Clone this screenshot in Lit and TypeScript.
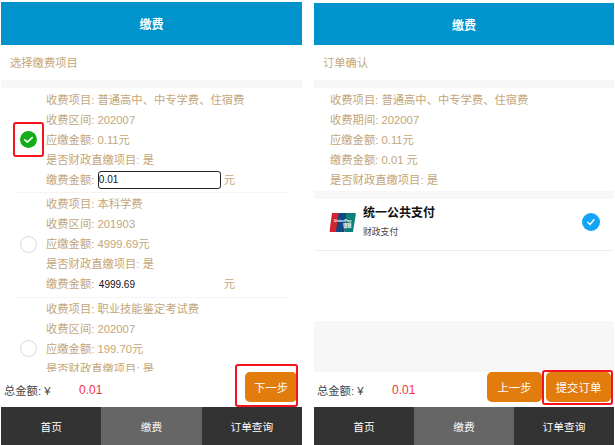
import { LitElement, html, css, svg } from "lit";
import { customElement } from "lit/decorators.js";

const items = [
  { name: "普通高中、中专学费、住宿费", term: "202007", due: "0.11元", pay: "0.01", checked: true },
  { name: "本科学费", term: "201903", due: "4999.69元", pay: "4999.69", checked: false },
  { name: "职业技能鉴定考试费", term: "202007", due: "199.70元", pay: "199.7", checked: false },
];

const tabs = (active: number) => html`<nav class="tabs">
  ${["首页", "缴费", "订单查询"].map(
    (t, i) => html`<div class="tab ${i === active ? "on" : ""}">${t}</div>`
  )}
</nav>`;

const unionpay = svg`<svg class="logo" width="27" height="21" viewBox="0 0 28 22">
  <path d="M3 1h9l-3 20H1.500a1 1 0 0 1-1-1.200L3 1z" fill="#d5222f"/>
  <path d="M10 1h9l-3 20H7L10 1z" fill="#14477f"/>
  <path d="M18 1h9a1 1 0 0 1 1 1.200L25 21h-9L18 1z" fill="#0f7f7c"/>
  <text x="14" y="10" font-size="4" font-weight="700" fill="#fff" text-anchor="middle" font-family="Liberation Sans">UnionPay</text>
  <text x="19" y="16" font-size="4.500" font-weight="700" fill="#fff" text-anchor="middle" font-family="Noto Sans CJK SC">银联</text>
</svg>`;

@customElement("app-root")
export class AppRoot extends LitElement {
  static styles = css`
    :host {
      display: flex;
      height: 445px;
      width: 615px;
      overflow: hidden;
      background: #fff;
      font-family: "Liberation Sans", "Noto Sans CJK SC", sans-serif;
      font-size: 11.3px;
      color: #c4a679;
    }
    .panel {
      position: relative;
      display: flex;
      flex-direction: column;
      width: 301px;
      margin-top: 2px;
      margin-left: 1px;
      height: 443px;
      overflow: hidden;
    }
    .panel.second {
      width: 300px;
      margin-left: 12px;
      margin-top: 3px;
      height: 442px;
    }
    .header {
      flex: none;
      height: 43px;
      background: #0093cc;
      color: #fff;
      font-weight: 700;
      font-size: 12px;
      display: flex;
      align-items: center;
      justify-content: center;
    }
    .second .header {
      height: 42px;
    }
    .sub {
      flex: none;
      height: 35px;
      box-sizing: border-box;
      padding-left: 9px;
      padding-bottom: 2px;
      display: flex;
      align-items: center;
      background: #fff;
    }
    .band {
      flex: none;
      height: 8px;
      background: #f7f7f7;
    }
    .scroll {
      flex: 1;
      min-height: 0;
      overflow: hidden;
      padding: 1.500px 14px 0 15px;
      background: #fff;
    }
    .item {
      display: flex;
      align-items: center;
      border-bottom: 1px solid #f4f4f4;
      padding-bottom: 2.500px;
      margin-bottom: 1px;
    }
    .radio {
      flex: none;
      box-sizing: border-box;
      width: 17px;
      height: 17px;
      margin-left: 4px;
      margin-right: 9px;
      border-radius: 50%;
      border: 1px solid #d9d9d9;
    }
    .radio.on {
      border: none;
    }
    .radio.on svg {
      display: block;
    }
    .lines {
      flex: 1;
      min-width: 0;
    }
    .line {
      height: 20px;
      line-height: 20px;
      white-space: nowrap;
      display: flex;
      align-items: center;
    }
    .amount {
      box-sizing: border-box;
      width: 123px;
      height: 18px;
      margin-left: 3.500px;
      margin-right: 3px;
      padding: 0;
      font: 10px "Liberation Sans", sans-serif;
      color: #111;
      background: transparent;
      border: 1px solid transparent;
      border-radius: 3px;
      outline: none;
    }
    .amount.on {
      border: 1px solid #222;
      background: #fff;
    }
    .summary {
      flex: none;
      background: #fff;
      padding: 1.500px 0 1.500px 16px;
    }
    .pay {
      flex: none;
      height: 52px;
      box-sizing: border-box;
      background: #fff;
      border-bottom: 1px solid #eee;
      display: flex;
      align-items: center;
      padding: 0 14px 5px 15px;
    }
    .logo {
      flex: none;
      margin-right: 7px;
    }
    .pay-text {
      flex: 1;
      display: flex;
      flex-direction: column;
      gap: 7px;
    }
    .pay-title {
      font-weight: 700;
      font-size: 12px;
      line-height: 14px;
      color: #111;
    }
    .pay-sub {
      font-size: 8.800px;
      line-height: 11px;
      color: #444;
    }
    .blank {
      flex: none;
      height: 70px;
      background: #fff;
    }
    .fill {
      flex: 1;
      min-height: 0;
      background: #f7f7f7;
    }
    .footer {
      flex: none;
      height: 35px;
      display: flex;
      align-items: center;
      background: #fff;
      padding-left: 3px;
      padding-right: 3px;
      color: #444;
    }
    .label {
      width: 75px;
      flex: none;
    }
    .total {
      color: #f5333f;
      font-size: 12px;
      flex: 1;
    }
    .btn {
      flex: none;
      height: 30px;
      background: #e27c0d;
      color: #fff;
      border-radius: 5px;
      font-size: 11.400px;
      display: flex;
      align-items: center;
      justify-content: center;
      margin-top: -5px;
    }
    .btn.next {
      width: 52px;
      margin-right: 2px;
    }
    .btn.prev {
      width: 55px;
      margin-right: 4px;
    }
    .btn.submit {
      width: 65px;
    }
    .tabs {
      flex: none;
      height: 38px;
      display: flex;
      background: #333;
      color: #fff;
      font-size: 10.700px;
    }
    .tab {
      flex: 1;
      display: flex;
      align-items: center;
      justify-content: center;
    }
    .tab.on {
      background: #666;
    }
    .mark {
      position: absolute;
      box-sizing: border-box;
      border: 2px solid #f5141e;
      border-radius: 3px;
      pointer-events: none;
    }
    .mark.a {
      left: 12px;
      top: 120px;
      width: 31px;
      height: 35px;
    }
    .mark.b {
      left: 234px;
      top: 362px;
      width: 63px;
      height: 43px;
    }
    .mark.c {
      left: 228px;
      top: 367px;
      width: 71px;
      height: 35px;
    }
  `;

  render() {
    return html`
      <section class="panel">
        <header class="header">缴费</header>
        <div class="sub">选择缴费项目</div>
        <div class="band"></div>
        <div class="scroll">
          ${items.map(
            (it) => html`<div class="item">
              ${it.checked
                ? html`<div class="radio on">
                    <svg width="17" height="17" viewBox="0 0 17 17">
                      <circle cx="8.500" cy="8.500" r="8.500" fill="#12ad19" />
                      <path d="M4.800 8.800l2.600 2.400 4.800-4.600" fill="none" stroke="#fff" stroke-width="1.600" stroke-linecap="round" stroke-linejoin="round" />
                    </svg>
                  </div>`
                : html`<div class="radio"></div>`}
              <div class="lines">
                <div class="line">收费项目: ${it.name}</div>
                <div class="line">收费区间: ${it.term}</div>
                <div class="line">应缴金额: ${it.due}</div>
                <div class="line">是否财政直缴项目: 是</div>
                <div class="line">缴费金额:<input class="amount ${it.checked ? "on" : ""}" .value=${it.pay} />元</div>
              </div>
            </div>`
          )}
        </div>
        <div class="footer">
          <span class="label">总金额: ¥</span>
          <span class="total">0.01</span>
          <div class="btn next">下一步</div>
        </div>
        ${tabs(1)}
        <div class="mark a"></div>
        <div class="mark b"></div>
      </section>
      <section class="panel second">
        <header class="header">缴费</header>
        <div class="sub">订单确认</div>
        <div class="band"></div>
        <div class="summary">
          <div class="line">收费项目: 普通高中、中专学费、住宿费</div>
          <div class="line">收费期间: 202007</div>
          <div class="line">应缴金额: 0.11元</div>
          <div class="line">缴费金额: 0.01 元</div>
          <div class="line">是否财政直缴项目: 是</div>
        </div>
        <div class="band"></div>
        <div class="pay">
          ${unionpay}
          <div class="pay-text">
            <div class="pay-title">统一公共支付</div>
            <div class="pay-sub">财政支付</div>
          </div>
          <svg width="18" height="18" viewBox="0 0 18 18">
            <circle cx="9" cy="9" r="9" fill="#12a5f5" />
            <path d="M5.800 9.300l2.200 2.200 4-4.800" fill="none" stroke="#fff" stroke-width="1.400" stroke-linecap="round" stroke-linejoin="round" />
          </svg>
        </div>
        <div class="blank"></div>
        <div class="fill"></div>
        <div class="footer">
          <span class="label">总金额: ¥</span>
          <span class="total">0.01</span>
          <div class="btn prev">上一步</div>
          <div class="btn submit">提交订单</div>
        </div>
        ${tabs(1)}
        <div class="mark c"></div>
      </section>
    `;
  }
}
